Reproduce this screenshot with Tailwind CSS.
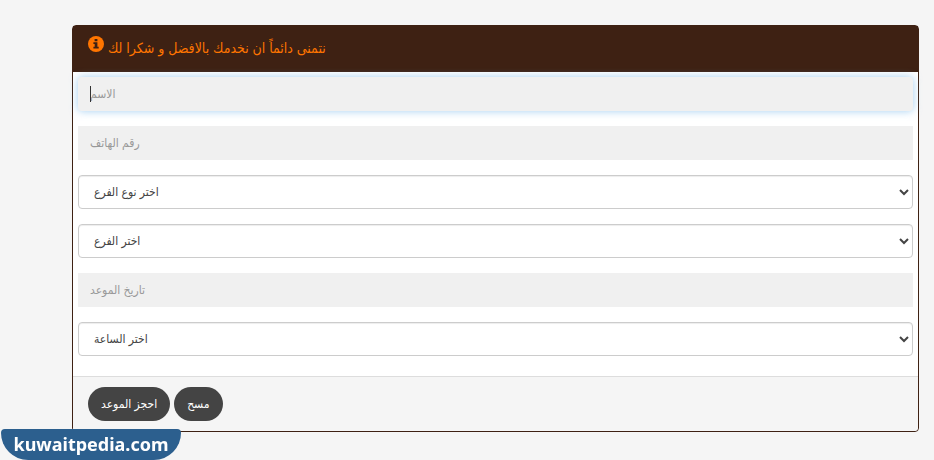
<!DOCTYPE html>
<html lang="ar" dir="ltr">
  <head>
    <meta charset="UTF-8" />
    <meta name="viewport" content="width=device-width, initial-scale=1.0" />
    <title>حجز موعد</title>
    <script src="https://cdn.jsdelivr.net/npm/@tailwindcss/browser@4"></script>
    <style>
      body {
        font-family: "Liberation Sans", "DejaVu Sans Condensed", "DejaVu Sans",
          sans-serif;
      }
    </style>
  </head>
  <body class="bg-[#f5f5f5] text-xs text-[#444444]">
    <form class="ml-[72px] mr-[15px] mt-[25px] rounded border border-[#3e2113] bg-white">
      <!-- Header -->
      <div class="flex h-[46px] items-center gap-1 bg-[#3e2113] px-[15px] pb-[2px] text-[#ff7500]">
        <svg viewBox="0 0 16 16" class="mb-2 size-4" aria-hidden="true">
          <circle cx="8" cy="8" r="8" fill="currentColor" />
          <path
            fill="#3e2113"
            d="M6.6 3h2.8v2.2H6.6zM5.4 6.2h4v4.5h1.3v1.8H5.4v-1.8h1.3V8H5.4z"
          />
        </svg>
        <h1 class="text-sm"><bdi dir="rtl">نتمنى دائماً ان نخدمك بالافضل و شكرا لك</bdi></h1>
      </div>

      <!-- Fields -->
      <div class="flex flex-col gap-[15px] px-[5px] pt-[5px] pb-5">
        <div class="relative">
          <input
            type="text"
            aria-label="الاسم"
            placeholder="الاسم"
            class="block h-[34px] w-full rounded-sm bg-[#f0f0f0] px-3 shadow-[0_0_8px_rgba(102,175,233,0.6)] outline-none placeholder:text-[#999999]"
          />
          <span class="absolute top-[9px] left-3 h-4 w-px bg-[#333333]"></span>
        </div>
        <input
          type="tel"
          aria-label="رقم الهاتف"
          placeholder="رقم الهاتف"
          class="block h-[34px] w-full bg-[#f0f0f0] px-3 outline-none placeholder:text-[#999999]"
        />
        <select
          aria-label="اختر نوع الفرع"
          class="block h-[34px] w-full rounded border border-[#cccccc] bg-white px-[11px] shadow-[inset_0_1px_1px_rgba(0,0,0,0.075)]"
        >
          <option>اختر نوع الفرع</option>
        </select>
        <select
          aria-label="اختر الفرع"
          class="block h-[34px] w-full rounded border border-[#cccccc] bg-white px-[11px] shadow-[inset_0_1px_1px_rgba(0,0,0,0.075)]"
        >
          <option>اختر الفرع</option>
        </select>
        <input
          type="text"
          aria-label="تاريخ الموعد"
          placeholder="تاريخ الموعد"
          class="block h-[34px] w-full bg-[#f0f0f0] px-3 outline-none placeholder:text-[#999999]"
        />
        <select
          aria-label="اختر الساعة"
          class="block h-[34px] w-full rounded border border-[#cccccc] bg-white px-[11px] shadow-[inset_0_1px_1px_rgba(0,0,0,0.075)]"
        >
          <option>اختر الساعة</option>
        </select>
      </div>

      <!-- Buttons -->
      <div class="flex gap-1 rounded-b border-t border-[#dddddd] bg-[#f5f5f5] px-[15px] py-[10px] text-white">
        <button type="submit" class="h-[34px] rounded-full bg-[#444444] px-[13px]">احجز الموعد</button>
        <button type="reset" class="h-[34px] rounded-full bg-[#444444] px-[13px]">مسح</button>
      </div>
    </form>

    <a
      href="#"
      class="fixed bottom-0 left-px flex h-[31px] w-[180px] items-center justify-center rounded-t rounded-b-[28px] bg-[#2c5f8e] pb-[2px] font-['Noto_Sans'] text-lg font-bold text-white"
      >kuwaitpedia.com</a
    >
  </body>
</html>
